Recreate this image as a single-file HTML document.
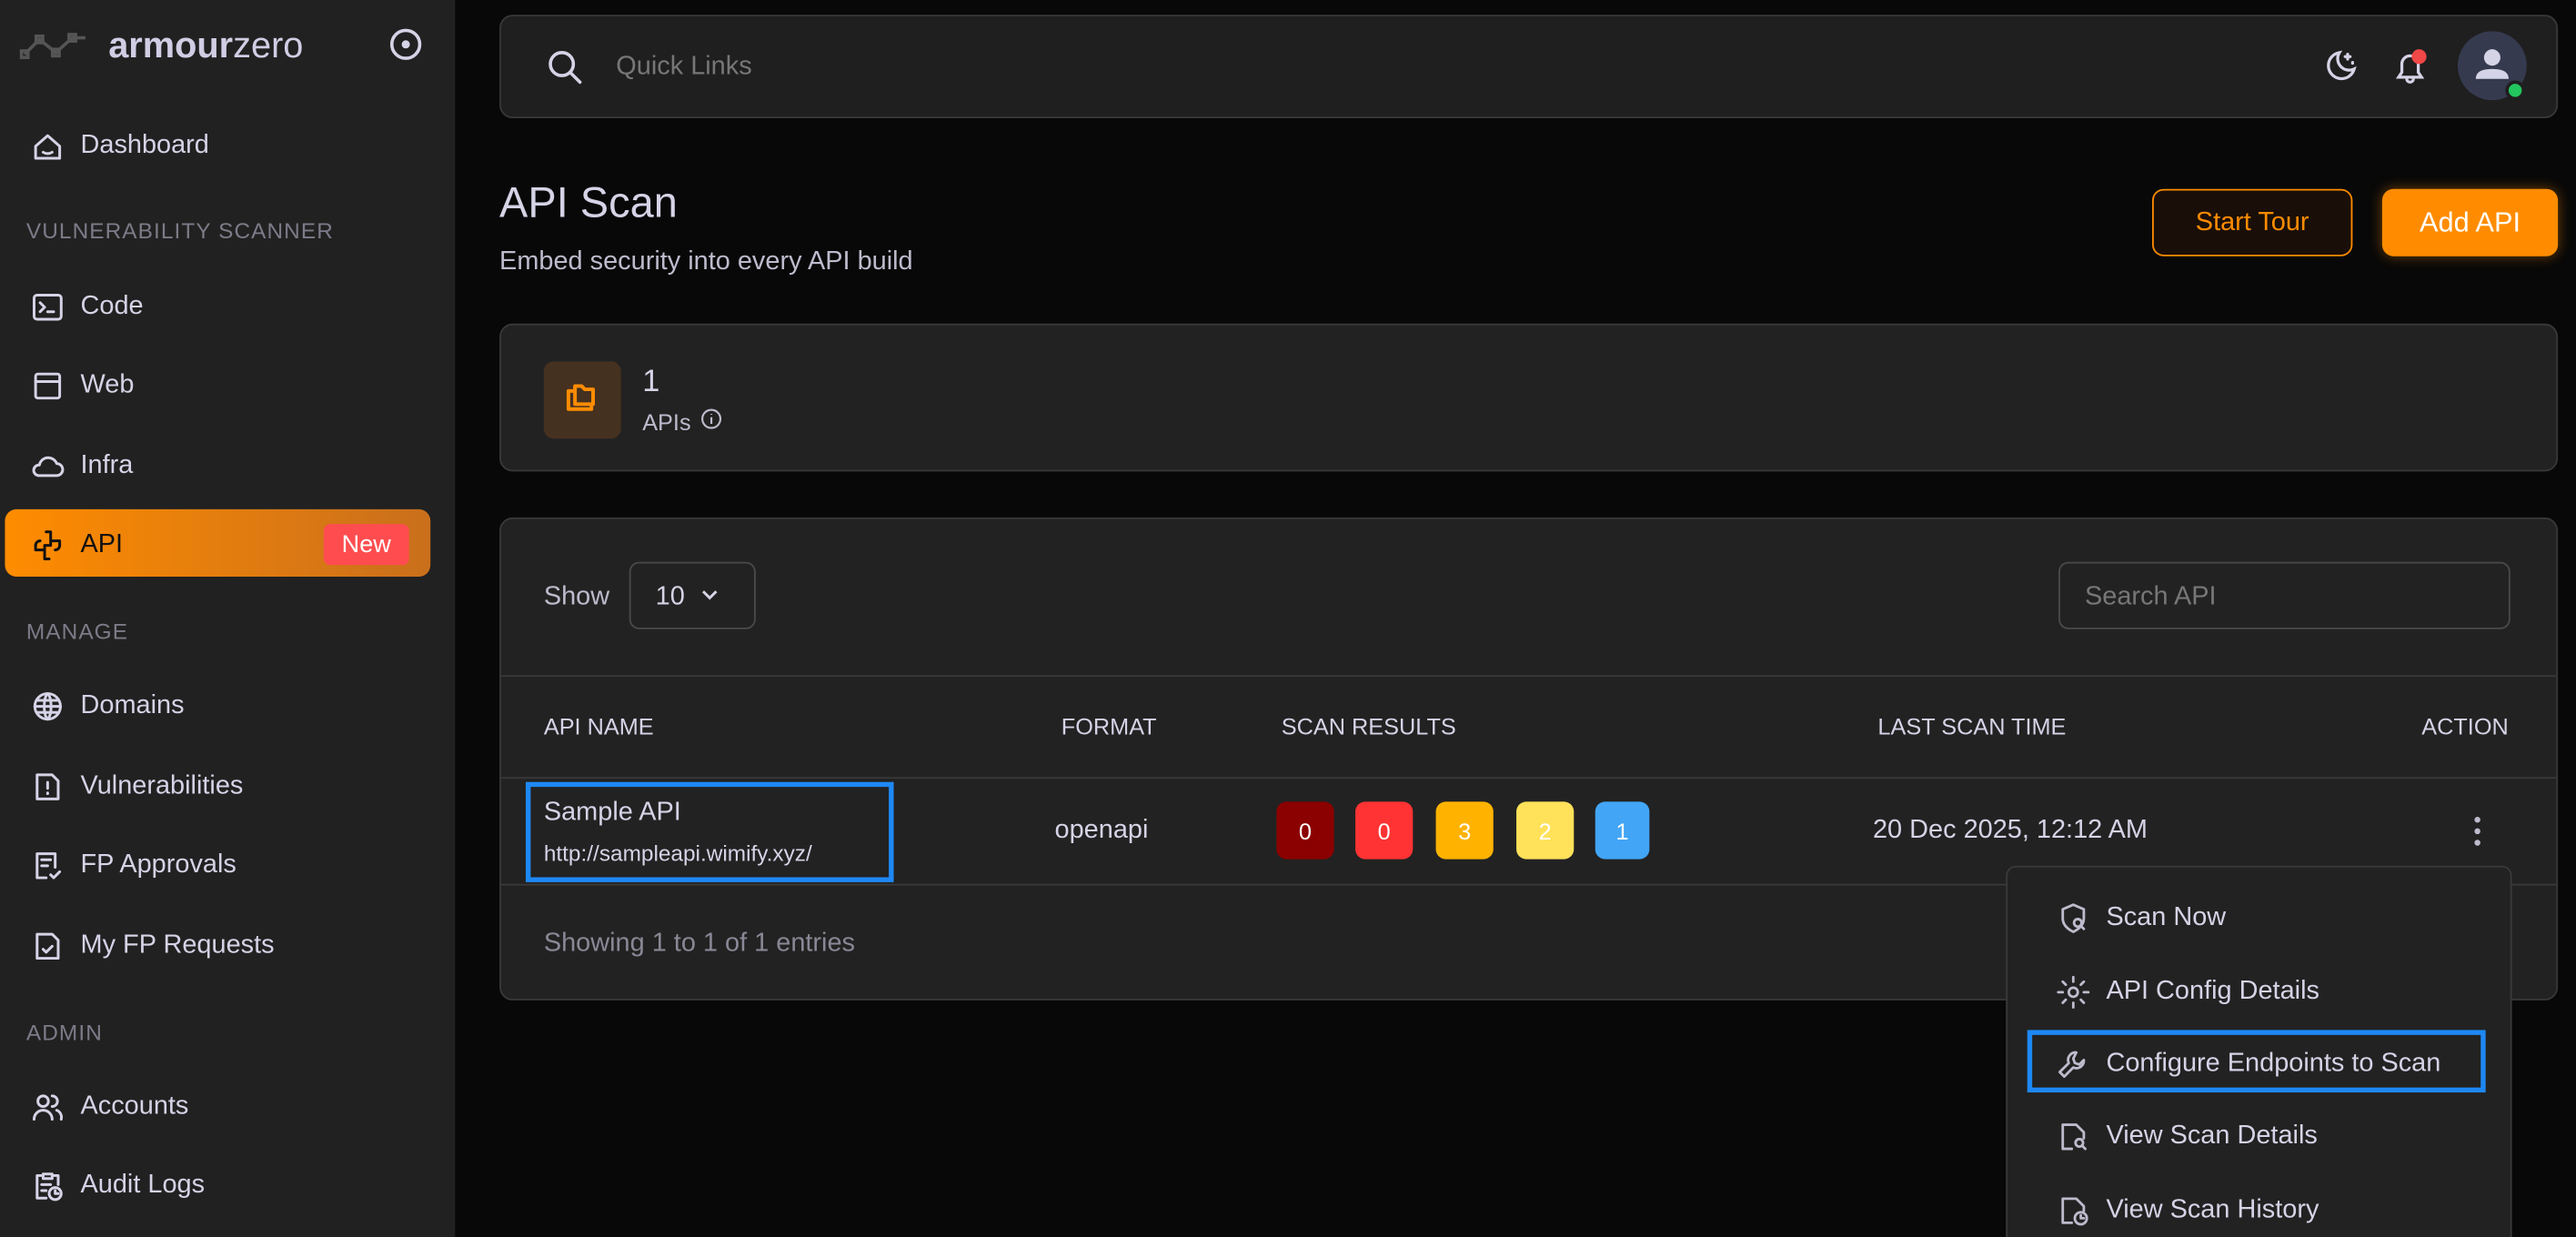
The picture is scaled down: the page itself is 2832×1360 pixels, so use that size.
<!DOCTYPE html>
<html><head><meta charset="utf-8"><style>
*{box-sizing:border-box;margin:0;padding:0}
html,body{width:2832px;height:1360px;overflow:hidden;background:#080808}
#w{width:1568px;height:753px;transform:scale(1.80612);transform-origin:0 0;position:relative;font-family:"Liberation Sans",sans-serif;color:#d5d3e6}
.a{position:absolute}
.sb{left:0;top:0;width:277px;height:753px;background:#212121}
.nav{position:absolute;left:0;width:277px;height:24px;display:flex;align-items:center;font-size:16px;color:#d5d3e6}
.nav svg{position:absolute;left:18px;width:22px;height:22px;fill:none;stroke:#d5d3e6;stroke-width:1.8;stroke-linecap:round;stroke-linejoin:round}
.nav span{position:absolute;left:49px}
.sec{position:absolute;left:16px;font-size:13.5px;letter-spacing:.6px;color:#7d7b88}
.card{position:absolute;background:#222;border:1px solid #383838;border-radius:8px}
.th{position:absolute;top:434px;font-size:14px;color:#d5d3e6}
.bd{position:absolute;top:488px;width:35px;height:35px;border-radius:6px;color:#fff;font-size:14px;display:flex;align-items:center;justify-content:center}
.mi{position:absolute;left:1251px;font-size:16px;color:#d5d3e6;display:flex;align-items:center;height:24px}
.mi svg{width:22px;height:22px;fill:none;stroke:#bdbbcc;stroke-width:1.7;stroke-linecap:round;stroke-linejoin:round;margin-right:9px}
</style></head><body><div id="w">
<div class="a sb"></div>
<svg class="a" style="left:12px;top:17px" width="42" height="20" viewBox="0 0 42 20" fill="none" stroke="#555" stroke-width="2"><path d="M3 16 L12 7 L22 15 L32 6 L40 6"/><rect x="1" y="14" width="4" height="4"/><rect x="10" y="5" width="4" height="4"/><rect x="20" y="13" width="4" height="4"/><rect x="30" y="4" width="4" height="4"/></svg>
<div class="a" style="left:66px;top:15px;font-size:22px;color:#d0cde4"><b>armour</b>zero</div>
<svg class="a" style="left:236px;top:16px" width="22" height="22" viewBox="0 0 22 22" fill="none" stroke="#d5d3e6" stroke-width="2"><circle cx="11" cy="11" r="8.5"/><circle cx="11" cy="11" r="1.5" fill="#d5d3e6"/></svg>

<div class="nav" style="top:77px"><svg viewBox="0 0 24 24"><path d="M4 20h16v-8L12 5 4 12z"/><path d="M9 16c2 1.2 4 1.2 6 0"/></svg><span>Dashboard</span></div>
<div class="sec" style="top:133px">VULNERABILITY SCANNER</div>
<div class="nav" style="top:175px"><svg viewBox="0 0 24 24"><rect x="3" y="4" width="18" height="16" rx="2"/><path d="M7 9l3 3-3 3M12 15h4"/></svg><span>Code</span></div>
<div class="nav" style="top:223px"><svg viewBox="0 0 24 24"><rect x="4" y="4" width="16" height="16" rx="1.5"/><path d="M4 9h16"/></svg><span>Web</span></div>
<div class="nav" style="top:272px"><svg viewBox="0 0 24 24"><path d="M6 18h12a4 4 0 0 0 0-8 6 6 0 0 0-11.5 1A3.5 3.5 0 0 0 6 18z"/></svg><span>Infra</span></div>
<div class="a" style="left:3px;top:310px;width:259px;height:41px;border-radius:7px;background:linear-gradient(90deg,#ff8c00,#c96f1c)"></div>
<div class="nav" style="top:320px;color:#111"><svg viewBox="0 0 24 24" style="stroke:#111"><path d="M11 3h3v6h6v3M13 21h-3v-6H4v-3M14 9v3h-4M10 15v-3"/><path d="M4 12a3 3 0 0 1 3-3M20 12a3 3 0 0 1-3 3"/></svg><span>API</span></div>
<div class="a" style="left:197px;top:319px;width:52px;height:25px;background:#ff4d4f;border-radius:4px;color:#fff;font-size:15px;display:flex;align-items:center;justify-content:center">New</div>
<div class="sec" style="top:377px">MANAGE</div>
<div class="nav" style="top:418px"><svg viewBox="0 0 24 24"><circle cx="12" cy="12" r="8.5"/><path d="M3.5 12h17M12 3.5c-3 3-3 14 0 17M12 3.5c3 3 3 14 0 17M5 8h14M5 16h14"/></svg><span>Domains</span></div>
<div class="nav" style="top:467px"><svg viewBox="0 0 24 24"><path d="M5 4h10l4 4v12H5z"/><path d="M12 9v4M12 16v.5"/></svg><span>Vulnerabilities</span></div>
<div class="nav" style="top:515px"><svg viewBox="0 0 24 24"><path d="M11 20H5V4h12v9"/><path d="M8 8h6M8 12h4M14 18l2 2 4-4"/></svg><span>FP Approvals</span></div>
<div class="nav" style="top:564px"><svg viewBox="0 0 24 24"><path d="M5 4h10l4 4v12H5z"/><path d="M9 14l2 2 4-4"/></svg><span>My FP Requests</span></div>
<div class="sec" style="top:621px">ADMIN</div>
<div class="nav" style="top:662px"><svg viewBox="0 0 24 24"><circle cx="9" cy="8" r="3.5"/><path d="M3 20a6 6 0 0 1 12 0M15 4.5a3.5 3.5 0 0 1 0 7M18 14a5 5 0 0 1 3 6"/></svg><span>Accounts</span></div>
<div class="nav" style="top:710px"><svg viewBox="0 0 24 24"><path d="M9 4h6v3H9zM9 5H5v15h6M15 5h4v6M8 11h6M8 15h3"/><circle cx="17" cy="17" r="4"/><path d="M17 15v2h2"/></svg><span>Audit Logs</span></div>

<div class="card" style="left:304px;top:9px;width:1253px;height:63px;background:#1f1f1f"></div>
<svg class="a" style="left:332px;top:29px" width="24" height="24" viewBox="0 0 24 24" fill="none" stroke="#d5d3e6" stroke-width="2" stroke-linecap="round"><circle cx="10" cy="10" r="7"/><path d="M15 15l6 6"/></svg>
<div class="a" style="left:375px;top:32px;font-size:16px;color:#777">Quick Links</div>
<svg class="a" style="left:1412px;top:29px" width="24" height="24" viewBox="0 0 24 24" fill="none" stroke="#d5d3e6" stroke-width="1.8" stroke-linecap="round"><path d="M12 3a8 8 0 1 0 9 10 7 7 0 0 1-9-10z"/><path d="M17 4v3M15.5 5.5h3M20 9v.5"/></svg>
<svg class="a" style="left:1455px;top:29px" width="24" height="24" viewBox="0 0 24 24" fill="none" stroke="#d5d3e6" stroke-width="1.8" stroke-linecap="round"><path d="M5 18h14l-2-3v-5a5 5 0 0 0-10 0v5zM10 19a2 2 0 0 0 4 0"/></svg>
<div class="a" style="left:1468px;top:30px;width:9px;height:9px;border-radius:50%;background:#f04747"></div>
<div class="a" style="left:1496px;top:19px;width:42px;height:42px;border-radius:50%;background:#363a4f"></div>
<svg class="a" style="left:1502px;top:25px" width="30" height="30" viewBox="0 0 30 30" fill="#d5d3e6"><circle cx="15" cy="10" r="5"/><path d="M5 23c0-5 5-6 10-6s10 1 10 6z"/></svg>
<div class="a" style="left:1525px;top:49px;width:12px;height:12px;border-radius:50%;background:#22c55e;border:2px solid #1f1f1f"></div>

<div class="a" style="left:304px;top:108px;font-size:26px;color:#d5d3e6">API Scan</div>
<div class="a" style="left:304px;top:151px;font-size:16px;color:#bdbbcc">Embed security into every API build</div>
<div class="a" style="left:1310px;top:115px;width:122px;height:41px;border:1.5px solid #ff8c00;border-radius:7px;background:#1a0f08;color:#ff8c00;font-size:16px;display:flex;align-items:center;justify-content:center">Start Tour</div>
<div class="a" style="left:1450px;top:115px;width:107px;height:41px;border-radius:7px;background:#ff8c00;color:#fff;font-size:17px;display:flex;align-items:center;justify-content:center;box-shadow:0 0 8px rgba(255,140,0,.4)">Add API</div>

<div class="card" style="left:304px;top:197px;width:1253px;height:90px"></div>
<div class="a" style="left:331px;top:220px;width:47px;height:47px;border-radius:6px;background:#45311f"></div>
<svg class="a" style="left:340px;top:229px" width="29" height="29" viewBox="0 0 29 29" fill="none" stroke="#ff8c00" stroke-width="2.2" stroke-linejoin="round"><path d="M9 9h-3v11h14v-3"/><path d="M10 6h4l2 2h5v9h-11z"/></svg>
<div class="a" style="left:391px;top:222px;font-size:19px">1</div>
<div class="a" style="left:391px;top:249px;font-size:14px;color:#bdbbcc">APIs</div>
<svg class="a" style="left:426px;top:248px" width="14" height="14" viewBox="0 0 14 14" fill="none" stroke="#bdbbcc" stroke-width="1.2"><circle cx="7" cy="7" r="5.5"/><path d="M7 6v4M7 4v.5"/></svg>

<div class="card" style="left:304px;top:315px;width:1253px;height:294px"></div>
<div class="a" style="left:331px;top:355px;font-size:16px;color:#bdbbcc">Show</div>
<div class="a" style="left:383px;top:342px;width:77px;height:41px;border:1px solid #4a4a4a;border-radius:6px"></div>
<div class="a" style="left:399px;top:355px;font-size:16px">10</div>
<svg class="a" style="left:425px;top:356px" width="14" height="12" viewBox="0 0 14 12" fill="none" stroke="#d5d3e6" stroke-width="1.6"><path d="M3 4l4 4 4-4"/></svg>
<div class="a" style="left:1253px;top:342px;width:275px;height:41px;border:1px solid #4a4a4a;border-radius:6px"></div>
<div class="a" style="left:1269px;top:355px;font-size:16px;color:#777">Search API</div>
<div class="a" style="left:305px;top:411px;width:1251px;height:1px;background:#393939"></div>
<div class="th" style="left:331px">API NAME</div>
<div class="th" style="left:646px">FORMAT</div>
<div class="th" style="left:780px">SCAN RESULTS</div>
<div class="th" style="left:1143px">LAST SCAN TIME</div>
<div class="th" style="left:1474px">ACTION</div>
<div class="a" style="left:305px;top:473px;width:1251px;height:1px;background:#393939"></div>
<div class="a" style="left:305px;top:538px;width:1251px;height:1px;background:#393939"></div>
<div class="a" style="left:320px;top:476px;width:224px;height:61px;border:3px solid #1e88f5"></div>
<div class="a" style="left:331px;top:486px;font-size:16px">Sample API</div>
<div class="a" style="left:331px;top:512px;font-size:13.5px">http://sampleapi.wimify.xyz/</div>
<div class="a" style="left:642px;top:497px;font-size:16px">openapi</div>
<div class="bd" style="left:777px;background:#8b0000">0</div>
<div class="bd" style="left:825px;background:#ff3333">0</div>
<div class="bd" style="left:874px;background:#ffb300">3</div>
<div class="bd" style="left:923px;background:#ffe15a">2</div>
<div class="bd" style="left:971px;width:33px;background:#42a5f5">1</div>
<div class="a" style="left:1140px;top:497px;font-size:16px">20 Dec 2025, 12:12 AM</div>
<svg class="a" style="left:1502px;top:495px" width="12" height="22" viewBox="0 0 12 22" fill="#bdbbcc"><circle cx="6" cy="4" r="1.8"/><circle cx="6" cy="11" r="1.8"/><circle cx="6" cy="18" r="1.8"/></svg>
<div class="a" style="left:331px;top:566px;font-size:16px;color:#8a8896">Showing 1 to 1 of 1 entries</div>

<div class="a" style="left:1221px;top:527px;width:308px;height:240px;background:#222;border:1px solid #3a3a3a;border-radius:6px"></div>
<div class="a" style="left:1234px;top:627px;width:279px;height:38px;border:3px solid #1e88f5"></div>
<div class="mi" style="top:547px"><svg viewBox="0 0 24 24"><path d="M12 3l7 3v6c0 4-3 7-7 9-4-2-7-5-7-9V6z"/><circle cx="15" cy="15" r="2.5"/><path d="M17 17l2 2"/></svg>Scan Now</div>
<div class="mi" style="top:592px"><svg viewBox="0 0 24 24"><circle cx="12" cy="12" r="3"/><path d="M12 2v3M12 19v3M2 12h3M19 12h3M5 5l2 2M17 17l2 2M5 19l2-2M17 7l2-2"/></svg>API Config Details</div>
<div class="mi" style="top:636px"><svg viewBox="0 0 24 24"><path d="M14 4a5 5 0 0 0-5 7l-6 6 3 3 6-6a5 5 0 0 0 7-5l-3 3-3-1-1-3z"/></svg>Configure Endpoints to Scan</div>
<div class="mi" style="top:680px"><svg viewBox="0 0 24 24"><path d="M11 20H5V4h9l5 5v4"/><circle cx="16" cy="16" r="2.5"/><path d="M18 18l2 2"/></svg>View Scan Details</div>
<div class="mi" style="top:725px"><svg viewBox="0 0 24 24"><path d="M11 20H5V4h9l5 5v3"/><circle cx="17" cy="17" r="4"/><path d="M17 15v2h2"/></svg>View Scan History</div>
</div></body></html>
